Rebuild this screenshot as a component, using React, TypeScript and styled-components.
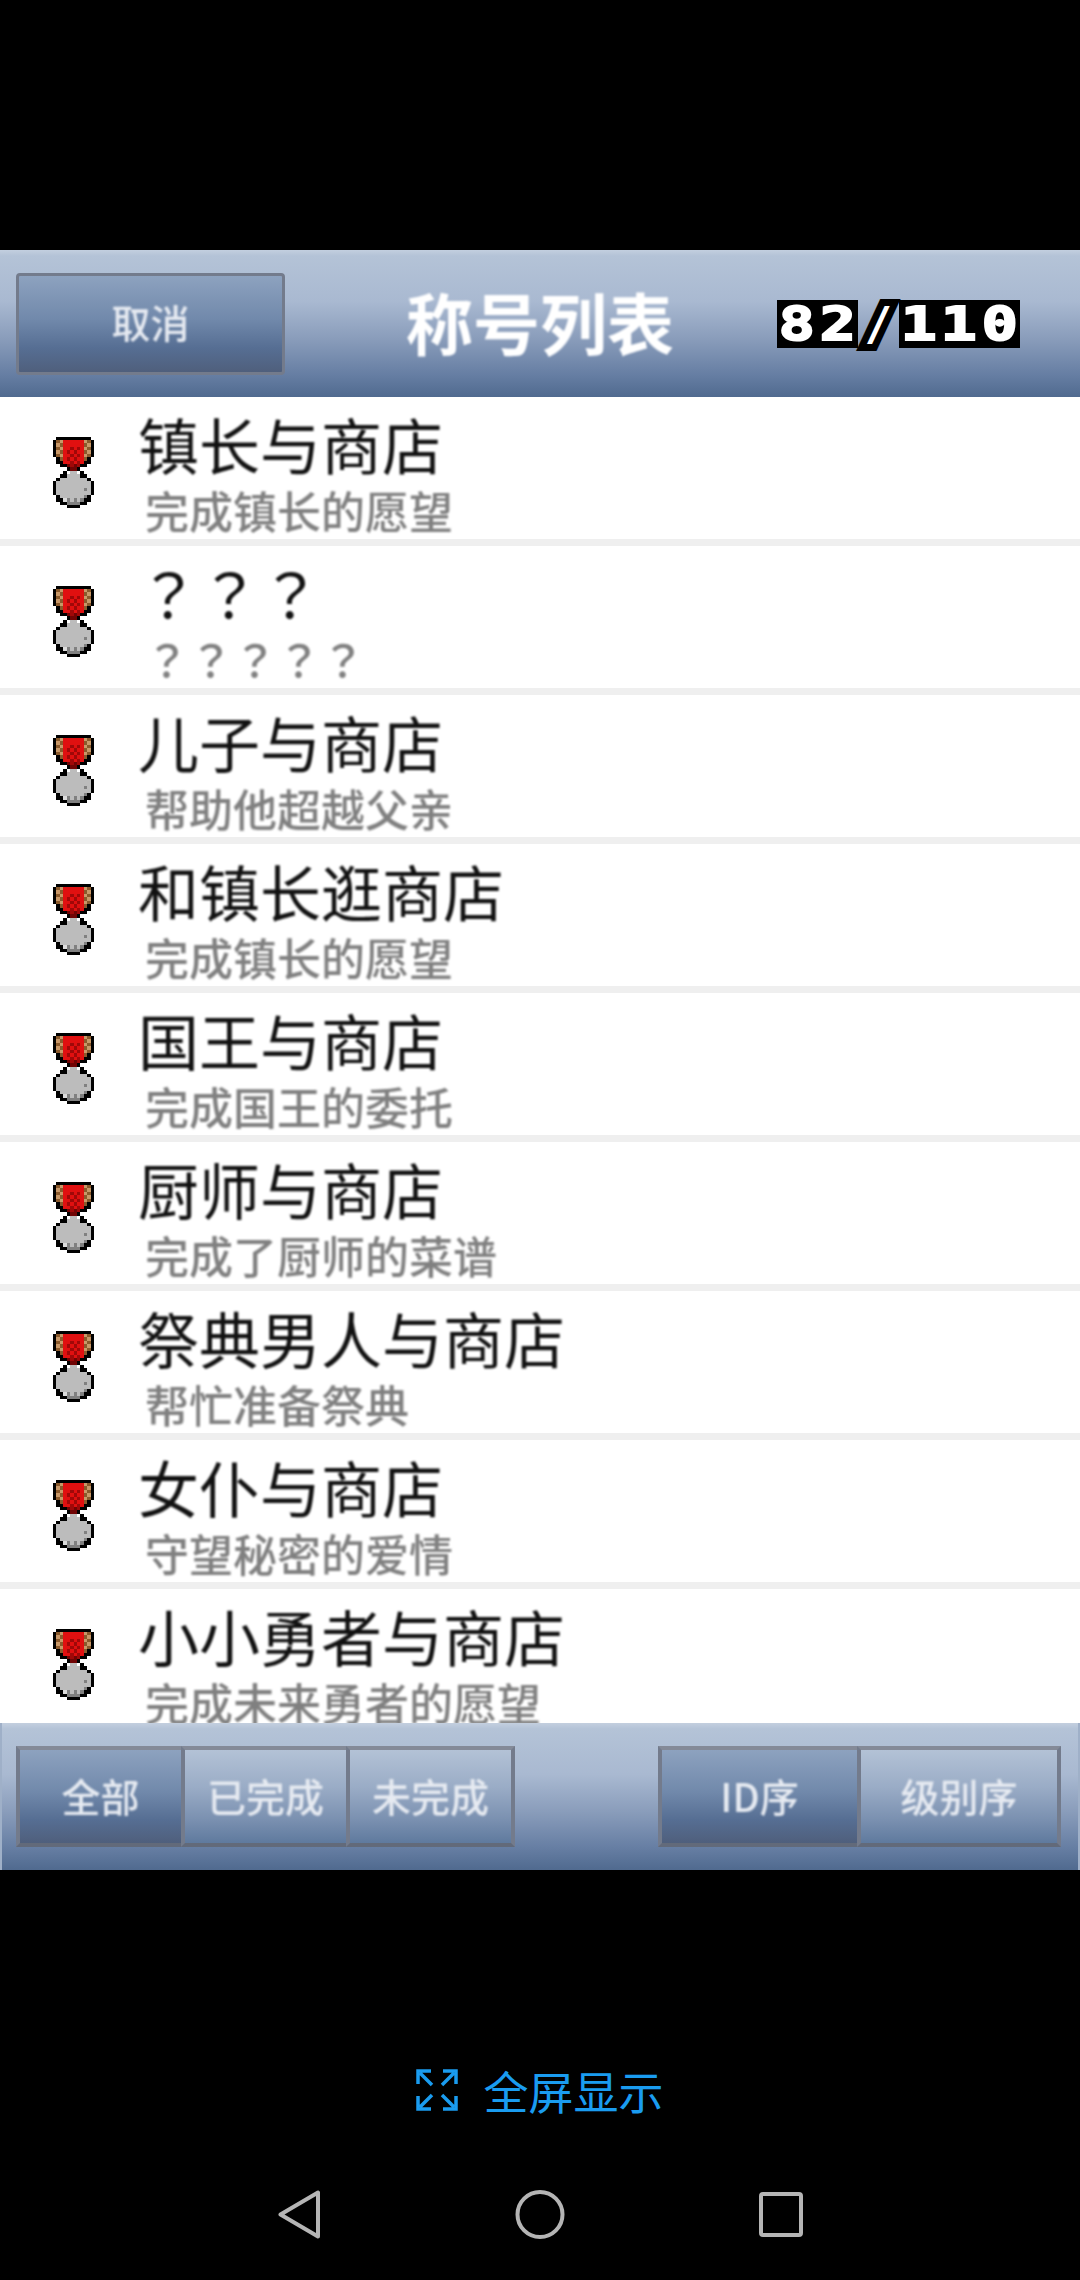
import styled, { createGlobalStyle } from 'styled-components';

const GlobalStyle = createGlobalStyle`
    html, body {
        margin: 0;
        padding: 0;
        background: #000;
    }
    * {
        box-sizing: border-box;
    }
`;

const titles = [
    { name: '镇长与商店', desc: '完成镇长的愿望' },
    { name: '？？？', desc: '？？？？？', unknown: true },
    { name: '儿子与商店', desc: '帮助他超越父亲' },
    { name: '和镇长逛商店', desc: '完成镇长的愿望' },
    { name: '国王与商店', desc: '完成国王的委托' },
    { name: '厨师与商店', desc: '完成了厨师的菜谱' },
    { name: '祭典男人与商店', desc: '帮忙准备祭典' },
    { name: '女仆与商店', desc: '守望秘密的爱情' },
    { name: '小小勇者与商店', desc: '完成未来勇者的愿望' },
];

const medalPixels = [
    '.KKKKKKKKKK.',
    'KBLRRRRRRLBK',
    'KLBRRRRRRBLK',
    'KBLRRDRDRLBK',
    'KLBRDRDRRBLK',
    'KBLRRDRDRLBK',
    '.KBRDRDRRBK.',
    '.KKRRDRDRKK.',
    '..KKEDEDKK..',
    '....KEEK....',
    '...K.SS.K...',
    '..KKSSSSKK..',
    '.KSSSSSSSSK.',
    'KSSSSSSSSSSK',
    'KSSSSSSSSSSK',
    'KSSSSSSSSGSK',
    'KSSSSSSSSSSK',
    '.KSSSSSSSGK.',
    '.KKTGSGSGKK.',
    '..KKGGGGKK..',
    '....KKKK....',
];

const medalColors: Record<string, string> = {
    K: '#000000',
    B: '#8a5a2c',
    L: '#c89868',
    R: '#e01010',
    D: '#a00808',
    E: '#700404',
    S: '#bcbcbc',
    T: '#dcdcdc',
    G: '#808080',
};

const Medal = () => (
    <MedalSvg viewBox="0 0 12 21" shapeRendering="crispEdges">
        {medalPixels.map((line, y) =>
            line.split('').map((c, x) =>
                c === '.' ? null : (
                    <rect key={`${x}-${y}`} x={x} y={y} width={1} height={1} fill={medalColors[c]} />
                ),
            ),
        )}
    </MedalSvg>
);

const App = () => {
    return (
        <Screen>
            <GlobalStyle />
            <Header>
                <CancelButton>
                    <ButtonLabel>取消</ButtonLabel>
                </CancelButton>
                <Title>称号列表</Title>
                <Counter>
                    {'82'.split('').map((d, i) => (
                        <CounterCell key={i}>
                            <CounterGlyph>{d}</CounterGlyph>
                        </CounterCell>
                    ))}
                    <CounterSlash>/</CounterSlash>
                    {'110'.split('').map((d, i) => (
                        <CounterCell key={i}>
                            <CounterGlyph>{d}</CounterGlyph>
                        </CounterCell>
                    ))}
                </Counter>
            </Header>

            <List>
                {titles.map((t, i) => (
                    <Row key={i}>
                        <Medal />
                        <RowText>
                            <RowName $unknown={t.unknown}>{t.name}</RowName>
                            <RowDesc $unknown={t.unknown}>{t.desc}</RowDesc>
                        </RowText>
                    </Row>
                ))}
            </List>

            <Footer>
                <SegmentGroup>
                    <Segment $width={169} $active>
                        <ButtonLabel>全部</ButtonLabel>
                    </Segment>
                    <Segment $width={169}>
                        <ButtonLabel>已完成</ButtonLabel>
                    </Segment>
                    <Segment $width={169}>
                        <ButtonLabel>未完成</ButtonLabel>
                    </Segment>
                </SegmentGroup>
                <SegmentGroup>
                    <Segment $width={203} $active>
                        <ButtonLabel>ID序</ButtonLabel>
                    </Segment>
                    <Segment $width={204}>
                        <ButtonLabel>级别序</ButtonLabel>
                    </Segment>
                </SegmentGroup>
            </Footer>

            <FullscreenLink>
                <svg width="42" height="42" viewBox="0 0 42 42" fill="none" stroke="#1a9cf0" strokeWidth="3.5">
                    <path d="M2 15V2H15M4 4L16 16" />
                    <path d="M27 2H40V15M38 4L26 16" />
                    <path d="M2 27V40H15M4 38L16 26" />
                    <path d="M27 40H40V27M38 38L26 26" />
                </svg>
                <FullscreenLabel>全屏显示</FullscreenLabel>
            </FullscreenLink>

            <NavBar>
                <svg width="43" height="49" viewBox="0 0 43 49" fill="none" stroke="#b5b5b5" strokeWidth="4" strokeLinejoin="round">
                    <path d="M40 2.500V46.500L2.500 24.500Z" />
                </svg>
                <svg width="50" height="49" viewBox="0 0 50 49" fill="none" stroke="#b5b5b5" strokeWidth="4">
                    <circle cx="25" cy="24.500" r="22.500" />
                </svg>
                <svg width="44" height="45" viewBox="0 0 44 45" fill="none" stroke="#b5b5b5" strokeWidth="4" strokeLinejoin="round">
                    <rect x="2" y="2" width="40" height="41" rx="2" />
                </svg>
            </NavBar>
        </Screen>
    );
};

const Screen = styled.div`
    width: 1080px;
    height: 2280px;
    padding-top: 250px;
    overflow: hidden;
    background: #000;
    font-family: 'Noto Sans CJK SC', 'Noto Sans', sans-serif;
    display: flex;
    flex-direction: column;
`;

const barGradient = `linear-gradient(
    to bottom,
    #c3cfdf 0,
    #b4c3d7 4%,
    #a9b9d1 35%,
    #8a9dbb 60%,
    #667ea3 85%,
    #506a8f 100%
)`;

const Header = styled.header`
    height: 147px;
    flex-shrink: 0;
    display: grid;
    grid-template-columns: 1fr auto 1fr;
    align-items: center;
    background: ${barGradient};
`;

const CancelButton = styled.div`
    width: 269px;
    height: 102px;
    margin-left: 16px;
    padding-bottom: 4px;
    display: flex;
    align-items: center;
    justify-content: center;
    border: 3px solid #737b8c;
    border-radius: 4px;
    background: linear-gradient(to bottom, #8da2bf 0, #7189ab 45%, #566e93 75%, #4f5f7c 100%);
`;

const ButtonLabel = styled.span`
    font-size: 39px;
    font-weight: 500;
    line-height: 1;
    color: #e6eaf1;
    filter: blur(0.8px);
`;

const Title = styled.h1`
    margin: 0;
    padding-bottom: 6px;
    font-size: 67px;
    font-weight: 700;
    line-height: 1;
    color: #fff;
    filter: blur(0.9px);
`;

const Counter = styled.div`
    justify-self: end;
    margin-right: 60px;
    display: flex;
    height: 48px;
    font-family: 'DejaVu Sans Mono', monospace;
    font-weight: 700;
    font-size: 46px;
    color: #fff;
`;

const CounterCell = styled.span`
    width: 40.500px;
    height: 48px;
    display: flex;
    align-items: center;
    justify-content: center;
    background: #000;
    line-height: 1;
`;

const CounterGlyph = styled.span`
    display: inline-block;
    transform: scaleX(1.3);
    -webkit-text-stroke: 2px #fff;
`;

const CounterSlash = styled(CounterCell)`
    background: none;
    -webkit-text-stroke: 14px #000;
    paint-order: stroke fill;
`;

const List = styled.main`
    height: 1326px;
    flex-shrink: 0;
    overflow: hidden;
    background: #fff;
`;

const Row = styled.div`
    height: 149px;
    padding: 17px 0 0 53px;
    display: flex;
    gap: 44px;
    background: #fff;
    border-bottom: 7px solid #efefef;
`;

const MedalSvg = styled.svg`
    width: 41px;
    height: 73px;
    margin-top: 22px;
    flex-shrink: 0;
`;

const RowText = styled.div`
    display: flex;
    flex-direction: column;
    gap: 14px;
`;

const RowName = styled.div<{ $unknown?: boolean }>`
    font-size: 61px;
    font-weight: 400;
    line-height: 60px;
    color: #111;
    filter: blur(0.8px);
    font-family: ${(p) => (p.$unknown ? "'Noto Sans CJK JP'" : "'Noto Sans CJK SC'")}, sans-serif;
`;

const RowDesc = styled.div<{ $unknown?: boolean }>`
    font-size: 44px;
    font-weight: 500;
    line-height: 44px;
    margin-left: 7px;
    color: #808080;
    filter: blur(0.8px);
    font-family: ${(p) => (p.$unknown ? "'Noto Sans CJK JP'" : "'Noto Sans CJK SC'")}, sans-serif;
`;

const Footer = styled.footer`
    height: 147px;
    flex-shrink: 0;
    padding: 0 17px 0 14px;
    display: flex;
    align-items: center;
    justify-content: space-between;
    background: ${barGradient};
    border-left: 2px solid #9fb0c8;
    border-right: 2px solid #9fb0c8;
`;

const SegmentGroup = styled.div`
    display: flex;
    height: 101px;
`;

const Segment = styled.div<{ $width: number; $active?: boolean }>`
    width: ${(p) => p.$width}px;
    padding-bottom: 2px;
    display: flex;
    align-items: center;
    justify-content: center;
    border: 4px solid #737b8c;
    border-top-color: #848a98;
    border-bottom-color: #626a7a;
    margin-left: -4px;
    &:first-child {
        margin-left: 0;
    }
    background: ${(p) =>
        p.$active
            ? 'linear-gradient(to bottom, #8da2bf 0, #7189ab 45%, #566e93 75%, #4f5f7c 100%)'
            : 'linear-gradient(to bottom, #b3c2d6 0, #9aacc6 40%, #7a90b0 75%, #5f7a9e 100%)'};
`;

const FullscreenLink = styled.div`
    margin-top: 199px;
    height: 42px;
    display: flex;
    align-items: center;
    justify-content: center;
    gap: 25px;
`;

const FullscreenLabel = styled.span`
    font-size: 45px;
    line-height: 1;
    color: #1a9cf0;
`;

const NavBar = styled.nav`
    margin-top: 79px;
    display: flex;
    align-items: center;
    justify-content: center;
    gap: 194px;
`;

export default App;
